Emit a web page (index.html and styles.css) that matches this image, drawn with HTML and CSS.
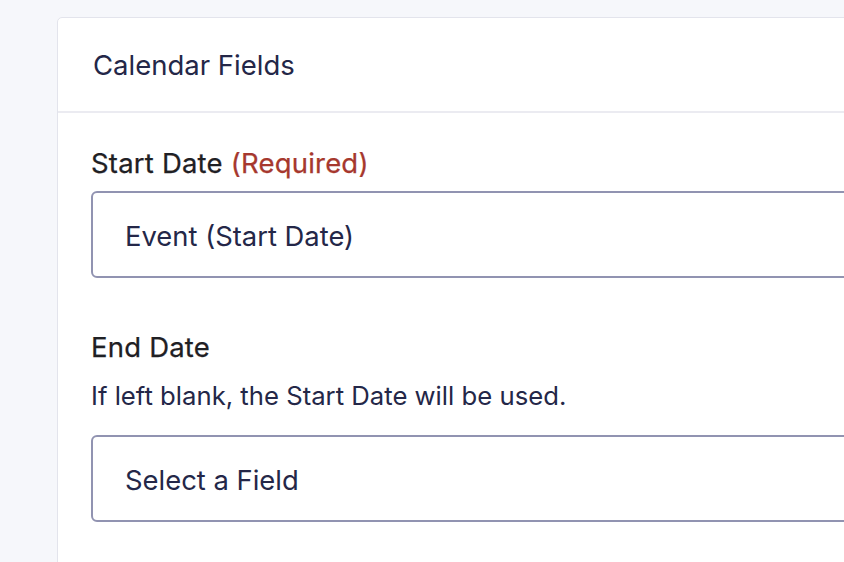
FILE: index.html
```html
<!DOCTYPE html>
<html lang="en">
<head>
<meta charset="utf-8">
<title>Calendar Fields</title>
<link rel="stylesheet" href="styles.css">
</head>
<body>
<div class="page">
  <section class="card">
    <header class="card-header">
      <h2 class="card-title">Calendar Fields</h2>
    </header>
    <div class="card-body">
      <div class="field">
        <label class="field-label">Start Date <span class="required">(Required)</span></label>
        <div class="select">Event (Start Date)</div>
      </div>
      <div class="field">
        <label class="field-label">End Date</label>
        <p class="field-help">If left blank, the Start Date will be used.</p>
        <div class="select">Select a Field</div>
      </div>
    </div>
  </section>
</div>
</body>
</html>
```

FILE: styles.css
```css
* { box-sizing: border-box; }
html, body {
  margin: 0;
  padding: 0;
  background: #f6f7fb;
  overflow: hidden;
  height: 100%;
}
body {
  font-family: Inter, "Noto Sans", "Liberation Sans", sans-serif;
  color: #242748;
}
.page {
  padding: 17px 0 0 57px;
}
.card {
  width: 900px;
  min-height: 600px;
  background: #ffffff;
  border: 1px solid #e3e4ec;
  border-radius: 5px;
}
.card-header {
  height: 95px;
  display: flex;
  align-items: center;
  padding-left: 35px;
  border-bottom: 2px solid #ebebf1;
}
.card-title {
  margin: 0;
  font-size: 27.5px;
  font-weight: 400;
  color: #242748;
}
.card-body {
  padding: 32px 0 0 33px;
}
.field {
  margin-bottom: 51px;
}
.field-label {
  display: block;
  font-size: 27.5px;
  font-weight: 400;
  letter-spacing: 0.2px;
  color: #1f2024;
  line-height: 36px;
  margin-bottom: 10px;
  -webkit-text-stroke: 0.25px currentColor;
}
.required {
  color: #a6382e;
}
.field-help {
  margin: 14px 0 22px;
  font-size: 25.7px;
  line-height: 34px;
  color: #242748;
}
.select {
  width: 800px;
  height: 87px;
  border: 2px solid #9193b1;
  border-radius: 6px;
  display: flex;
  align-items: center;
  padding: 3px 0 0 32px;
  font-size: 27.4px;
  color: #242748;
}
```
